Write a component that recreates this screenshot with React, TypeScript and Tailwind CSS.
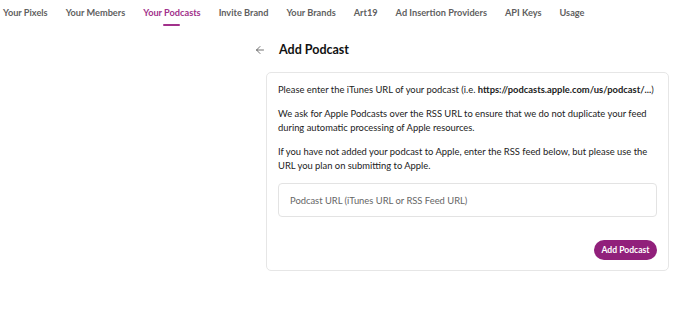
import { ArrowLeft } from 'lucide-react';

const tabs = [
  'Your Pixels',
  'Your Members',
  'Your Podcasts',
  'Invite Brand',
  'Your Brands',
  'Art19',
  'Ad Insertion Providers',
  'API Keys',
  'Usage',
];

export default function App() {
  return (
    <div className="h-[316px] w-[688px] bg-white font-['Lato',sans-serif] text-[#222]">
      <nav className="flex gap-[18px] pl-[3px] pt-[6px]">
        {tabs.map((tab) => (
          <div key={tab} className="flex flex-col items-center">
            <span
              className={
                tab === 'Your Podcasts'
                  ? 'text-[9.2px] font-bold leading-[14px] text-[#a2318b]'
                  : 'text-[9.2px] font-bold leading-[14px] text-[#5f5f5f]'
              }
            >
              {tab}
            </span>
            {tab === 'Your Podcasts' && <span className="mt-[4px] h-[2px] w-[17px] rounded bg-[#a2318b]" />}
          </div>
        ))}
      </nav>

      <div className="flex pt-[15px]">
        <div className="w-[254px] shrink-0" />
        <div className="flex w-[415px] flex-col">
          <div className="flex items-center gap-[13px]">
            <ArrowLeft size={12} strokeWidth={1.5} className="text-[#444]" />
            <h1 className="text-[12.5px] font-bold leading-[18px] text-[#111]">Add Podcast</h1>
          </div>

          <div className="ml-[12px] mt-[13px] flex flex-col rounded-[5px] border border-[#e6e6e6] px-[11px] pb-[10px] pt-[10px] text-[9.4px] leading-[14px]">
            <p className="whitespace-nowrap">
              Please enter the iTunes URL of your podcast (i.e.{' '}
              <span className="font-bold">https://podcasts.apple.com/us/podcast/...</span>)
            </p>
            <p className="mt-[10px]">
              We ask for Apple Podcasts over the RSS URL to ensure that we do not duplicate your feed during
              automatic processing of Apple resources.
            </p>
            <p className="mt-[10px]">
              If you have not added your podcast to Apple, enter the RSS feed below, but please use the URL you
              plan on submitting to Apple.
            </p>
            <input
              placeholder="Podcast URL (iTunes URL or RSS Feed URL)"
              className="mt-[10px] h-[34px] rounded-[4px] border border-[#e3e3e3] px-[11px] text-[9.4px] placeholder:text-[#666] focus:outline-none"
            />
            <div className="mt-[23px] flex justify-end">
              <button className="h-[20px] w-[63px] rounded-full bg-[#91207b] text-[8.6px] font-bold text-white">
                Add Podcast
              </button>
            </div>
          </div>
        </div>
      </div>
    </div>
  );
}
